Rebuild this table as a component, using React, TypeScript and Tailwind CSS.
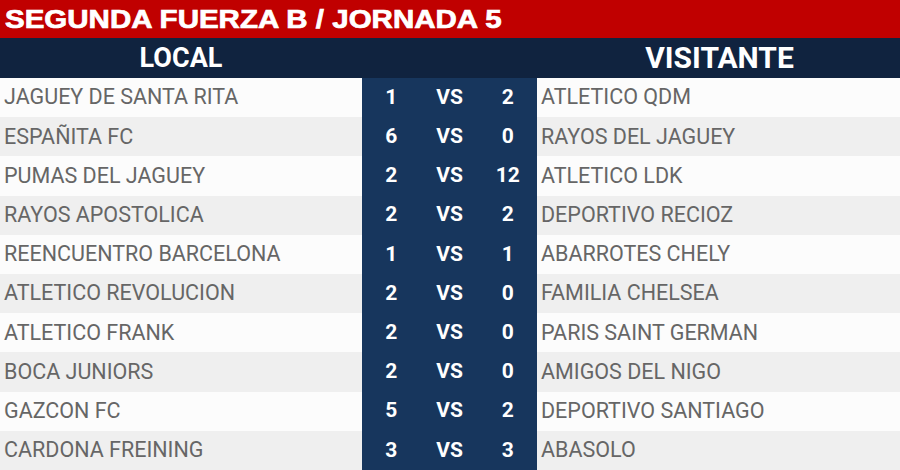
import React from "react";

const matches = [
  { local: "JAGUEY DE SANTA RITA", a: "1", b: "2", visit: "ATLETICO QDM" },
  { local: "ESPAÑITA FC", a: "6", b: "0", visit: "RAYOS DEL JAGUEY" },
  { local: "PUMAS DEL JAGUEY", a: "2", b: "12", visit: "ATLETICO LDK" },
  { local: "RAYOS APOSTOLICA", a: "2", b: "2", visit: "DEPORTIVO RECIOZ" },
  { local: "REENCUENTRO BARCELONA", a: "1", b: "1", visit: "ABARROTES CHELY" },
  { local: "ATLETICO REVOLUCION", a: "2", b: "0", visit: "FAMILIA CHELSEA" },
  { local: "ATLETICO FRANK", a: "2", b: "0", visit: "PARIS SAINT GERMAN" },
  { local: "BOCA JUNIORS", a: "2", b: "0", visit: "AMIGOS DEL NIGO" },
  { local: "GAZCON FC", a: "5", b: "2", visit: "DEPORTIVO SANTIAGO" },
  { local: "CARDONA FREINING", a: "3", b: "3", visit: "ABASOLO" },
];

export default function App() {
  return (
    <div className="w-[900px] h-[470px] overflow-hidden bg-white font-['Roboto',sans-serif] flex flex-col">
      <div className="h-[38px] shrink-0 bg-[#c00000] px-[5px] flex items-center">
        <h1 className="font-['Liberation_Sans',Arial,sans-serif] font-bold text-[25px] leading-none text-white origin-left scale-x-[1.18] [-webkit-text-stroke:0.7px_white] whitespace-nowrap">
          SEGUNDA FUERZA B / JORNADA 5
        </h1>
      </div>
      <div className="h-[40px] shrink-0 bg-[#10233f] grid grid-cols-[362px_175px_1fr] items-center text-white font-bold leading-none">
        <div className="text-center text-[27px]">LOCAL</div>
        <div />
        <div className="text-center text-[30px] pl-[2px]">VISITANTE</div>
      </div>
      <div className="flex-1 flex flex-col">
        {matches.map((m, i) => (
          <div
            key={i}
            className={`min-h-[39px] flex-1 grid grid-cols-[362px_175px_1fr] items-center text-[21.5px] ${i % 2 === 0 ? "bg-[#fcfcfc]" : "bg-[#efefef]"}`}
          >
            <div className="pl-[4px] text-[#666666]">{m.local}</div>
            <div className="h-full bg-[#17365d] grid grid-cols-3 items-center text-center text-white font-bold text-[21px]">
              <span>{m.a}</span>
              <span>VS</span>
              <span>{m.b}</span>
            </div>
            <div className="pl-[4px] text-[#666666]">{m.visit}</div>
          </div>
        ))}
      </div>
    </div>
  );
}
